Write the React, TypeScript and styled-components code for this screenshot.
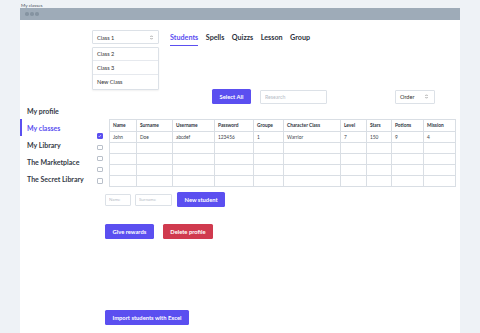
import * as React from "react";
import styled, { createGlobalStyle } from "styled-components";

const GlobalStyle = createGlobalStyle`
  html, body {
    margin: 0;
    padding: 0;
    background: #eef2f6;
    font-family: Lato, "Open Sans", sans-serif;
    color: #2d3340;
  }
  * { box-sizing: border-box; }
`;

const PURPLE = "#5b4ff0";

const columns: { label: string; width: number }[] = [
  { label: "Name", width: 27 },
  { label: "Surname", width: 36 },
  { label: "Username", width: 42 },
  { label: "Password", width: 39 },
  { label: "Groupe", width: 30 },
  { label: "Character Class", width: 57 },
  { label: "Level", width: 26 },
  { label: "Stars", width: 25 },
  { label: "Potions", width: 32 },
  { label: "Mission", width: 32 }
];

const rows: string[][] = [
  ["John", "Doe", "abcdef", "123456", "1", "Warrior", "7", "150", "9", "4"],
  ["", "", "", "", "", "", "", "", "", ""],
  ["", "", "", "", "", "", "", "", "", ""],
  ["", "", "", "", "", "", "", "", "", ""],
  ["", "", "", "", "", "", "", "", "", ""]
];

const menu = ["My profile", "My classes", "My Library", "The Marketplace", "The Secret Library"];
const tabs = ["Students", "Spells", "Quizzs", "Lesson", "Group"];

const UpDown = () => (
  <svg width="3" height="5" viewBox="0 0 3 5">
    <path d="M0.5 1.8 L1.5 0.8 L2.5 1.8 M0.5 3.2 L1.5 4.2 L2.5 3.2" stroke="#555" strokeWidth="0.6" fill="none" />
  </svg>
);

const App: React.FC = (): JSX.Element => {
  return (
    <>
      <GlobalStyle />
      <Page>
        <PageTitle>My classes</PageTitle>
        <Window>
          <WindowBar>
            <Dot />
            <Dot />
            <Dot />
          </WindowBar>
          <WindowBody>
            <Sidebar>
              {menu.map(item => (
                <SideItem key={item} active={item === "My classes"}>
                  {item}
                </SideItem>
              ))}
            </Sidebar>

            <Main>
              <TopRow>
                <SelectWrap>
                  <SelectBox>
                    Class 1
                    <UpDown />
                  </SelectBox>
                  <DropMenu>
                    <DropItem>Class 2</DropItem>
                    <DropItem>Class 3</DropItem>
                    <DropItem>New Class</DropItem>
                  </DropMenu>
                </SelectWrap>
                <Tabs>
                  {tabs.map(t => (
                    <Tab key={t} active={t === "Students"}>
                      {t}
                    </Tab>
                  ))}
                </Tabs>
              </TopRow>

              <ActionRow>
                <Button>Select All</Button>
                <SearchInput placeholder="Research" />
                <OrderSelect>
                  Order
                  <UpDown />
                </OrderSelect>
              </ActionRow>

              <TableSection>
                <CheckColumn>
                  {rows.map((_, i) => (
                    <CheckCell key={i}>
                      <Check checked={i === 0}>
                        {i === 0 && (
                          <svg width="4" height="4" viewBox="0 0 4 4">
                            <path d="M0.6 2 L1.6 3 L3.4 0.9" stroke="#fff" strokeWidth="0.7" fill="none" />
                          </svg>
                        )}
                      </Check>
                    </CheckCell>
                  ))}
                </CheckColumn>
                <Table>
                  <thead>
                    <tr>
                      {columns.map(c => (
                        <Th key={c.label} style={{ width: c.width }}>
                          {c.label}
                        </Th>
                      ))}
                    </tr>
                  </thead>
                  <tbody>
                    {rows.map((r, i) => (
                      <tr key={i}>
                        {r.map((v, j) => (
                          <Td key={j}>{v}</Td>
                        ))}
                      </tr>
                    ))}
                  </tbody>
                </Table>
              </TableSection>

              <FormRow>
                <SmallInput width={26} placeholder="Name" />
                <SmallInput width={37} placeholder="Surname" />
                <Button>New student</Button>
              </FormRow>

              <RewardRow>
                <Button>Give rewards</Button>
                <Button danger>Delete profile</Button>
              </RewardRow>

              <ImportRow>
                <Button>Import students with Excel</Button>
              </ImportRow>
            </Main>
          </WindowBody>
        </Window>
      </Page>
    </>
  );
};

export default App;

const Page = styled.div`
  width: 480px;
  height: 333px;
  padding: 0 20px 0 20px;
  display: flex;
  flex-direction: column;
  overflow: hidden;
`;

const PageTitle = styled.div`
  height: 8px;
  font-size: 4.6px;
  line-height: 10px;
  padding-left: 1px;
  color: #4a5260;
`;

const Window = styled.div`
  flex: 1;
  display: flex;
  flex-direction: column;
  background: #fff;
`;

const WindowBar = styled.div`
  height: 12px;
  background: #9eabb8;
  display: flex;
  align-items: center;
  gap: 1.5px;
  padding-left: 5px;
`;

const Dot = styled.span`
  width: 3.5px;
  height: 3.5px;
  border-radius: 50%;
  background: #8593a1;
`;

const WindowBody = styled.div`
  flex: 1;
  display: flex;
`;

const Sidebar = styled.nav`
  width: 72px;
  padding-top: 82px;
  display: flex;
  flex-direction: column;
`;

const SideItem = styled.div<{ active?: boolean }>`
  height: 17px;
  display: flex;
  align-items: center;
  padding-left: 5px;
  border-left: 2px solid ${p => (p.active ? PURPLE : "transparent")};
  font-size: 7px;
  font-weight: 700;
  white-space: nowrap;
  color: ${p => (p.active ? PURPLE : "#353a46")};
`;

const Main = styled.div`
  flex: 1;
  display: flex;
  flex-direction: column;
  padding: 10px 4px 0 0;
`;

const TopRow = styled.div`
  display: flex;
  align-items: flex-start;
  gap: 11px;
  height: 17px;
`;

const SelectWrap = styled.div`
  position: relative;
  width: 67px;
`;

const SelectBox = styled.div`
  height: 14px;
  border: 1px solid #dce1e7;
  border-radius: 1px;
  display: flex;
  align-items: center;
  justify-content: space-between;
  padding: 0 5px 0 4px;
  font-size: 5.6px;
  color: #333;
`;

const DropMenu = styled.div`
  position: absolute;
  top: 16.5px;
  left: 0;
  width: 67px;
  border: 1px solid #dce1e7;
  border-radius: 1px;
  background: #fff;
  box-shadow: 0 1px 2px rgba(0, 0, 0, 0.06);
`;

const DropItem = styled.div`
  height: 13.7px;
  display: flex;
  align-items: center;
  padding-left: 4px;
  font-size: 5.6px;
  color: #333;
  border-bottom: 1px solid #e6e9ee;
  &:last-child {
    border-bottom: none;
  }
`;

const Tabs = styled.div`
  display: flex;
  gap: 7.5px;
  padding-top: 3px;
`;

const Tab = styled.div<{ active?: boolean }>`
  font-size: 7.2px;
  font-weight: 700;
  padding-bottom: 2.5px;
  color: ${p => (p.active ? PURPLE : "#2d3340")};
  border-bottom: 1.5px solid ${p => (p.active ? PURPLE : "transparent")};
`;

const ActionRow = styled.div`
  display: flex;
  align-items: center;
  margin-top: 42px;
  padding: 0 21px 0 120px;
  height: 15px;
`;

const Button = styled.button<{ danger?: boolean }>`
  height: 15px;
  padding: 0 7.5px;
  border: none;
  border-radius: 1.5px;
  background: ${p => (p.danger ? "#d03a4e" : PURPLE)};
  color: #fff;
  font-family: inherit;
  font-size: 5.8px;
  font-weight: 700;
  white-space: nowrap;
`;

const SearchInput = styled.input`
  margin-left: 9px;
  width: 67px;
  height: 14px;
  border: 1px solid #dce1e7;
  border-radius: 1px;
  padding: 0 4px;
  font-family: inherit;
  font-size: 5.2px;
  &::placeholder {
    color: #b5bcc6;
  }
`;

const OrderSelect = styled.div`
  margin-left: auto;
  width: 40px;
  height: 14px;
  border: 1px solid #dce1e7;
  border-radius: 1px;
  display: flex;
  align-items: center;
  justify-content: space-between;
  padding: 0 6px 0 4px;
  font-size: 5.6px;
  color: #333;
`;

const TableSection = styled.div`
  display: flex;
  margin-top: 15px;
  padding-left: 5px;
`;

const CheckColumn = styled.div`
  width: 12px;
  padding-top: 11.5px;
  display: flex;
  flex-direction: column;
`;

const CheckCell = styled.div`
  height: 11.2px;
  display: flex;
  align-items: center;
`;

const Check = styled.span<{ checked?: boolean }>`
  width: 5.5px;
  height: 5.5px;
  border-radius: 1px;
  border: 0.6px solid ${p => (p.checked ? PURPLE : "#b9c0ca")};
  background: ${p => (p.checked ? PURPLE : "#fff")};
  display: flex;
  align-items: center;
  justify-content: center;
`;

const Table = styled.table`
  border-collapse: collapse;
  width: 346px;
  table-layout: fixed;
  border: 1px solid #cfd5dc;
`;

const Th = styled.th`
  height: 11.5px;
  padding: 0 0 0 3px;
  border: 1px solid #d9dee4;
  font-size: 4.8px;
  font-weight: 700;
  text-align: left;
  color: #2d3340;
  white-space: nowrap;
`;

const Td = styled.td`
  height: 11.2px;
  padding: 0 0 0 3px;
  border: 1px solid #d9dee4;
  font-size: 4.8px;
  color: #3a3f4a;
  white-space: nowrap;
`;

const FormRow = styled.div`
  display: flex;
  align-items: center;
  gap: 4px;
  margin-top: 5px;
  padding-left: 13px;
  & > button {
    margin-left: 1px;
  }
`;

const SmallInput = styled.input<{ width: number }>`
  width: ${p => p.width}px;
  height: 12px;
  border: 1px solid #dce1e7;
  border-radius: 1px;
  padding: 0 3px;
  font-family: inherit;
  font-size: 4.4px;
  &::placeholder {
    color: #b5bcc6;
  }
`;

const RewardRow = styled.div`
  display: flex;
  gap: 9px;
  margin-top: 17px;
  padding-left: 13px;
`;

const ImportRow = styled.div`
  display: flex;
  margin-top: 71px;
  padding-left: 13px;
`;
